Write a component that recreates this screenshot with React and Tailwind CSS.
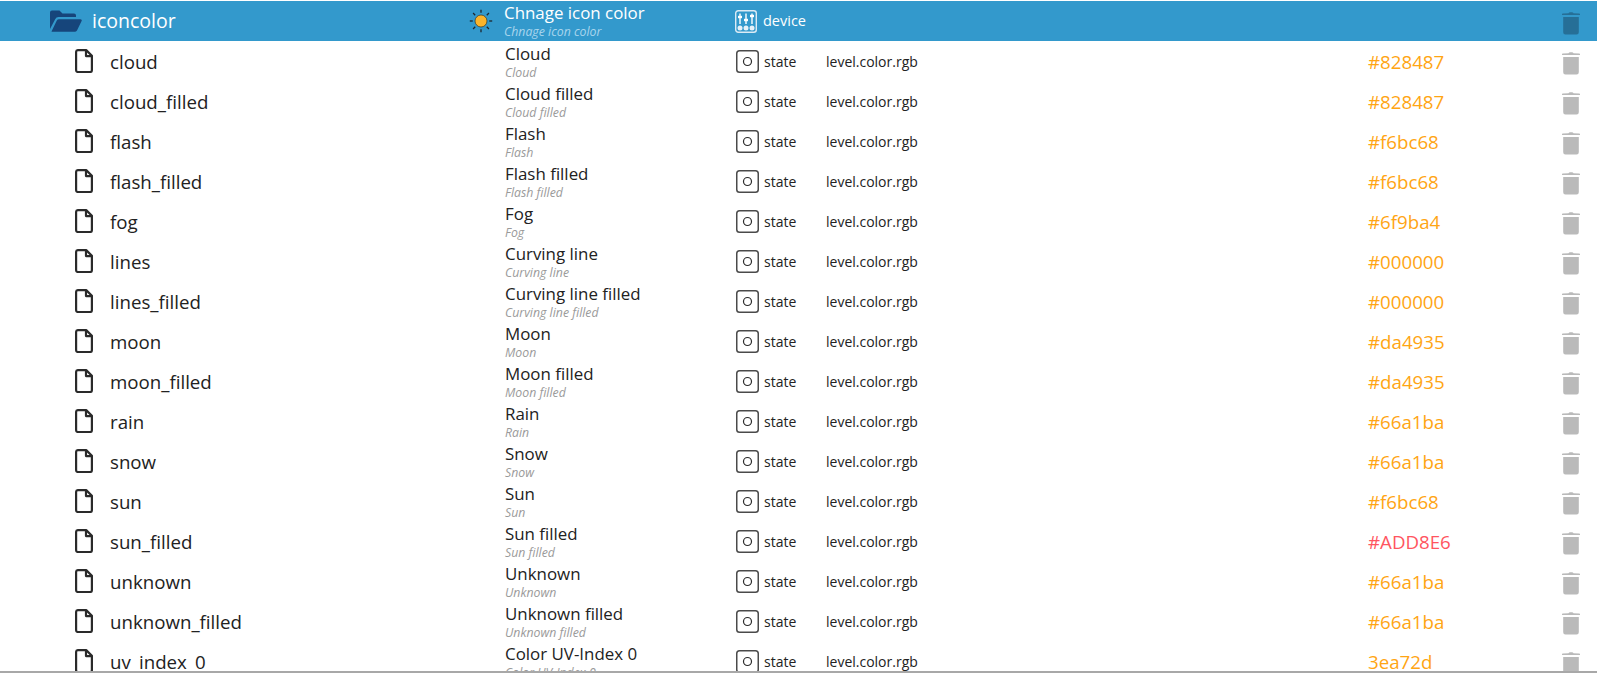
import { Fragment } from "react";

const rows = [
  { name: "cloud", title: "Cloud", color: "#828487" },
  { name: "cloud_filled", title: "Cloud filled", color: "#828487" },
  { name: "flash", title: "Flash", color: "#f6bc68" },
  { name: "flash_filled", title: "Flash filled", color: "#f6bc68" },
  { name: "fog", title: "Fog", color: "#6f9ba4" },
  { name: "lines", title: "Curving line", color: "#000000" },
  { name: "lines_filled", title: "Curving line filled", color: "#000000" },
  { name: "moon", title: "Moon", color: "#da4935" },
  { name: "moon_filled", title: "Moon filled", color: "#da4935" },
  { name: "rain", title: "Rain", color: "#66a1ba" },
  { name: "snow", title: "Snow", color: "#66a1ba" },
  { name: "sun", title: "Sun", color: "#f6bc68" },
  { name: "sun_filled", title: "Sun filled", color: "#ADD8E6", changed: true },
  { name: "unknown", title: "Unknown", color: "#66a1ba" },
  { name: "unknown_filled", title: "Unknown filled", color: "#66a1ba" },
  { name: "uv_index_0", title: "Color UV-Index 0", color: "3ea72d" },
];

function FolderOpen() {
  return (
    <svg width="32" height="22" viewBox="0 0 32 22">
      <path d="M0 19V2.500A2 2 0 0 1 2 .5h7.500l3 3H24a2 2 0 0 1 2 2V7H8.500a3.500 3.500 0 0 0-3.200 2.100Z" fill="#16457b" />
      <path d="M1.500 21.600 6.800 10.600A2.500 2.500 0 0 1 9 9.200h21.400a1.300 1.300 0 0 1 1.200 1.900l-4.600 9.500a2 2 0 0 1-1.800 1.100H2a.5.5 0 0 1-.5-.1Z" fill="#16457b" />
    </svg>
  );
}

function FileIcon() {
  return (
    <svg width="18" height="24" viewBox="0 0 18 24" fill="none" stroke="#2a2a2a" strokeWidth="2.200" strokeLinejoin="round">
      <path d="M2.800 1.100h8.400L16.900 6.800V21.200a1.800 1.800 0 0 1-1.800 1.800H2.800A1.800 1.800 0 0 1 1.100 21.200V2.800A1.800 1.800 0 0 1 2.800 1.100Z" />
      <path d="M11 1.100v6h5.900" />
    </svg>
  );
}

function SunIcon() {
  const angles = [0, 45, 90, 135, 180, 225, 270, 315];
  return (
    <svg width="24" height="24" viewBox="0 0 24 24">
      <circle cx="12" cy="12" r="6" fill="#fbb42c" stroke="#3b3320" strokeWidth="0.700" />
      {angles.map((a) => (
        <line key={a} x1="12" y1="0.800" x2="12" y2="3.800" stroke="#1d2730" strokeWidth="1.300" transform={`rotate(${a} 12 12)`} />
      ))}
    </svg>
  );
}

function DeviceIcon() {
  const x = [5, 11, 17];
  const knob = [7, 10, 6];
  return (
    <svg width="22" height="23" viewBox="0 0 22 23" fill="none">
      <rect x="0.700" y="0.700" width="20.600" height="21.600" rx="2.500" stroke="#dcebf5" strokeWidth="1.400" />
      {x.map((cx, i) => (
        <Fragment key={cx}>
          <line x1={cx} y1="3.500" x2={cx} y2="14" stroke="#fff" strokeWidth="1.400" />
          <rect x={cx - 2} y={knob[i] - 1.200} width="4" height="2.400" fill="#fff" />
          <circle cx={cx} cy="18" r="2.500" fill="#e6f1f8" />
        </Fragment>
      ))}
    </svg>
  );
}

function StateIcon() {
  return (
    <svg width="23" height="23" viewBox="0 0 23 23" fill="none">
      <rect x="0.750" y="0.750" width="21.500" height="21.500" rx="2.800" stroke="#4a4a4a" strokeWidth="1.500" />
      <circle cx="11.500" cy="11.500" r="4" stroke="#2a2a2a" strokeWidth="1.200" />
    </svg>
  );
}

function TrashIcon({ fill }) {
  return (
    <svg className="mt-1" width="18" height="23" viewBox="0 0 18 23" fill={fill}>
      <path d="M6.500 1.200C6.800.5 7.300.2 8 .2h2c.7 0 1.200.3 1.500 1l5.800.4c.4 0 .7.300.7.700v.7H0v-.7c0-.4.3-.7.700-.7Z" />
      <path d="M1.200 5h15.600v15.300a2.200 2.200 0 0 1-2.200 2.200H3.400a2.200 2.200 0 0 1-2.200-2.200Z" />
    </svg>
  );
}

function Row({ item }) {
  return (
    <div className="flex h-10 items-center">
      <div className="flex w-[505px] shrink-0 items-center pl-[75px]">
        <FileIcon />
        <span className="ml-[17px] pt-[2px] text-[18.700px] text-[#222]">{item.name}</span>
      </div>
      <div className="flex h-10 w-[231px] shrink-0 flex-col leading-none">
        <span className="mt-[3px] text-[16.900px] leading-[20px] text-[#222]">{item.title}</span>
        <span className="mt-[2px] text-[12.300px] leading-[14px] text-[#9a9a9a] italic">{item.title}</span>
      </div>
      <div className="flex w-[90px] shrink-0 items-center">
        <StateIcon />
        <span className="ml-[5px] text-[14px] text-[#222]">state</span>
      </div>
      <div className="w-[542px] shrink-0 text-[14px] text-[#222]">level.color.rgb</div>
      <div className={`w-[194px] shrink-0 pt-[2px] text-[18.700px] ${item.changed ? "text-[#ff5560]" : "text-[#ffa513]"}`}>
        {item.color}
      </div>
      <TrashIcon fill="#bababa" />
    </div>
  );
}

export default function App() {
  return (
    <div className="h-[681px] overflow-hidden bg-white pt-px font-['Open_Sans','Noto_Sans',sans-serif]">
      <div className="h-[672px] overflow-hidden border-b-2 border-[#a8a8a8]">
        <div className="flex h-10 items-center bg-[#3399cc]">
          <div className="flex w-[469px] shrink-0 items-center pl-[50px]">
            <FolderOpen />
            <span className="ml-[10px] text-[19.500px] text-white">iconcolor</span>
          </div>
          <div className="flex w-[35px] shrink-0">
            <SunIcon />
          </div>
          <div className="flex h-10 w-[231px] shrink-0 flex-col">
            <span className="text-[16.900px] leading-[24px] text-white">Chnage icon color</span>
            <span className="text-[12.300px] leading-[13px] text-[#a8d5ec] italic">Chnage icon color</span>
          </div>
          <div className="flex w-[827px] shrink-0 items-center">
            <DeviceIcon />
            <span className="ml-[6px] text-[14.500px] text-white">device</span>
          </div>
          <TrashIcon fill="#266f97" />
        </div>
        {rows.map((item) => (
          <Row key={item.name} item={item} />
        ))}
      </div>
    </div>
  );
}
